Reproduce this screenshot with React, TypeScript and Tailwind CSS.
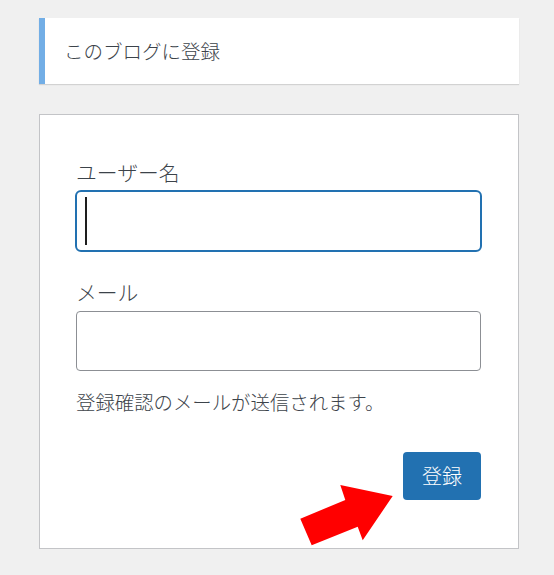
import React from "react";

export default function App() {
  const font = { fontFamily: '"Noto Sans CJK JP", "Noto Sans", sans-serif' };
  return (
    <div className="min-h-[575px] w-[554px] bg-[#f0f0f0] pt-[18px]" style={font}>
      <div className="ml-[39px] w-[480px]">
        <div className="flex h-[66px] items-center border-l-[6px] border-[#72aee6] bg-white pl-[19px] shadow-[0_1px_1px_rgba(0,0,0,0.12)]">
          <span className="text-[19.5px] font-light leading-none text-[#3c434a]">このブログに登録</span>
        </div>
        <div className="relative mt-[30px] h-[435px] border border-[#c3c4c7] bg-white pl-[36px] pr-[36px] pt-[42px]">
          <div className="text-[20.8px] font-light leading-[30px] text-[#3c434a]">ユーザー名</div>
          <div className="ml-[-1px] mt-[3px] flex h-[62px] w-[407px] items-center rounded-[6px] border-2 border-[#2271b1] pl-[8px]">
            <div className="h-[48px] w-[2px] bg-[#1e1e1e]" />
          </div>
          <div className="mt-[25px] text-[20.8px] font-light leading-[30px] text-[#3c434a]">メール</div>
          <div className="mt-[4px] h-[60px] w-[405px] rounded-[4px] border border-[#8c8f94]" />
          <div className="mt-[16px] text-[19.4px] font-light leading-[30px] text-[#3c434a]">登録確認のメールが送信されます。</div>
          <div className="mt-[35px] flex w-[405px] justify-end">
            <div className="flex h-[48px] w-[78px] items-center justify-center rounded-[4px] bg-[#2271b1] text-[20px] font-light text-white">
              登録
            </div>
          </div>
          <svg className="absolute left-0 top-0" width="480" height="435" viewBox="39 114 480 435">
            <polygon
              points="299.3,517.7 310.7,544.3 356.7,525.7 361.7,539.3 391.7,495 339.3,484 344.3,499"
              fill="#ff0000"
            />
          </svg>
        </div>
      </div>
    </div>
  );
}
